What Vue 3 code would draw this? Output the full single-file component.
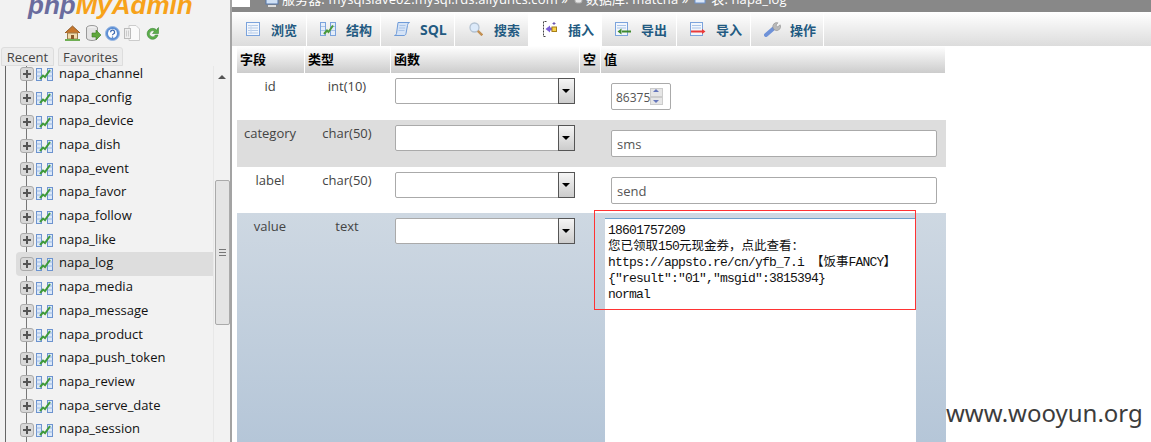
<script setup>
const tables = ['channel','config','device','dish','event','favor','follow','like','log','media','message','product','push_token','review','serve_date','session'].map(n => 'napa_' + n)
const tabs = [
  { k: 'browse', t: '浏览' }, { k: 'struct', t: '结构' }, { k: 'sql', t: 'SQL' }, { k: 'search', t: '搜索' },
  { k: 'insert', t: '插入', active: true }, { k: 'export', t: '导出' }, { k: 'import', t: '导入' }, { k: 'ops', t: '操作' }
]
const rows = [
  { f: 'id', t: 'int(10)', cls: 'r-id' },
  { f: 'category', t: 'char(50)', v: 'sms', cls: 'r-cat' },
  { f: 'label', t: 'char(50)', v: 'send', cls: 'r-label' }
]
</script>

<template>
  <div class="page">
    <aside class="nav">
      <div class="logo"><span class="php">php</span><span class="my">MyAdmin</span></div>
      <div class="quick">
        <svg width="17" height="16" viewBox="0 0 17 16"><path d="M1 8 8.500 1 16 8" fill="#c9772a" stroke="#8a5a2a"/><rect x="3.500" y="8" width="10" height="6" fill="#f1dcae" stroke="#9a7a4a"/><rect x="7" y="10" width="3" height="4" fill="#8a5a2a"/><rect x="1" y="14" width="15" height="2" fill="#6fae54"/></svg>
        <svg width="16" height="16" viewBox="0 0 16 16"><ellipse cx="7" cy="3" rx="5.500" ry="2.500" fill="#eee" stroke="#999"/><path d="M1.500 3v10c0 1.500 3 2.500 5.500 2.500s5.500-1 5.500-2.500V3" fill="#e4e4e4" stroke="#999"/><path d="M7 8h4V5l5 5-5 5v-3H7z" fill="#5fa83c" stroke="#3c7a22" stroke-width=".6"/></svg>
        <svg width="15" height="15" viewBox="0 0 15 15"><circle cx="7.500" cy="7.500" r="7" fill="#5d8fd4" stroke="#9ab8e2"/><circle cx="7.500" cy="7.500" r="4.500" fill="#fff"/><path d="M5.600 6.200a2 2 0 1 1 2.800 1.800c-.7.300-.9.700-.9 1.300M7.500 10.500v1.200" fill="none" stroke="#3a68b0" stroke-width="1.300"/></svg>
        <svg width="16" height="16" viewBox="0 0 16 16"><path d="M5 .5h7l3.500 3.500V15.500H5z" fill="#fafafa" stroke="#ccc"/><rect x=".5" y="3.500" width="6" height="10" fill="#eee" stroke="#bbb"/><path d="M2.500 5.500v6M4.500 5.500v6" stroke="#ccc"/></svg>
        <svg class="refresh" width="13" height="15" viewBox="0 0 13 15"><path d="M11 4.500A5.500 5.500 0 1 0 12 9H9.300A3 3 0 1 1 8.500 5.500L6.500 7.500H12.500V1.500L11 3z" fill="#5cae4a" stroke="#2f7a2a" stroke-width=".5"/></svg>
      </div>
      <div class="nav-tabs">
        <span class="nav-tab recent">Recent</span>
        <span class="nav-tab">Favorites</span>
      </div>
      <div class="tree-wrap">
        <ul class="tree">
          <li v-for="n in tables" :key="n" class="node" :class="{ sel: n === 'napa_log' }">
            <span class="plus"></span>
            <svg class="ticon" width="17" height="14" viewBox="0 0 17 14"><rect x=".5" y="1.500" width="5" height="12" fill="#dce8f8" stroke="#6c93cf"/><rect x="11.500" y="1.500" width="5" height="12" fill="#dce8f8" stroke="#6c93cf"/><path d="M.5 5h5M.5 9h5M11.500 5h5M11.500 9h5" stroke="#9ab8e2"/><path d="M4 12 7 8.500 9 10 14 3" fill="none" stroke="#3f9a3a" stroke-width="2"/></svg>
            <span class="name">{{ n }}</span>
          </li>
        </ul>
        <div class="sb">
          <span class="sb-up"></span>
          <div class="sb-thumb"><i></i><i></i><i></i></div>
        </div>
      </div>
    </aside>

    <main class="main">
      <div class="crumb">
        <span class="crumb-box"></span>
        <svg class="c-ico c-first" width="14" height="12" viewBox="0 0 14 12"><rect x="1" y="0" width="12" height="8" fill="#cfe0f5" stroke="#5577aa"/><rect x="3" y="9" width="8" height="2" fill="#ddd"/></svg>
        <span class="crumb-text">服务器: mysqlslave02.mysql.rds.aliyuncs.com »</span>
        <svg class="c-ico" width="9" height="12" viewBox="0 0 9 12"><rect x="1" y="-4" width="7" height="11" rx="2" fill="#e6e6e6" stroke="#aaa"/></svg>
        <span class="crumb-text">数据库: matcha »</span>
        <svg class="c-ico" width="14" height="12" viewBox="0 0 14 12"><rect x="1" y="-4" width="10" height="11" fill="#dce8f8" stroke="#6c93cf"/></svg>
        <span class="crumb-text">表: napa_log</span>
      </div>
      <nav class="tabs">
        <a v-for="tab in tabs" :key="tab.k" class="tab" :class="{ active: tab.active }">
          <span class="ico">
            <svg v-if="tab.k === 'browse'" width="14" height="14" viewBox="0 0 14 14"><rect x=".5" y=".5" width="13" height="13" fill="#f2f6fc" stroke="#7ba3dc"/><path d="M2 3.500h10M2 6h10M2 8.500h10M2 11h10" stroke="#b5cbe8"/><path d="M5 3v9" stroke="#c8d8ee"/></svg>
            <svg v-else-if="tab.k === 'struct'" width="16" height="14" viewBox="0 0 16 14"><rect x=".5" y=".5" width="5" height="13" fill="#e4edf9" stroke="#7ba3dc"/><rect x="10.500" y=".5" width="5" height="13" fill="#e4edf9" stroke="#7ba3dc"/><path d="M1 4.500h4M1 8.500h4M11 4.500h4M11 8.500h4" stroke="#a9c4e8"/><path d="M4 12 7 8.500 8.500 10 13 3.500" fill="none" stroke="#4a9a3a" stroke-width="2"/></svg>
            <svg v-else-if="tab.k === 'sql'" width="16" height="14" viewBox="0 0 16 14"><path d="M4 .5h11.500c-1.500.5-2 2-2 3l-1.500 8c-.2 1.200-1 2-2 2H.5c1 0 1.700-.8 2-2z" fill="#d5e3f6" stroke="#6f9bd8"/><path d="M5.500 3.500h6M5 6h6M4.500 8.500h6" stroke="#a9c4e8"/></svg>
            <svg v-else-if="tab.k === 'search'" width="14" height="14" viewBox="0 0 14 14"><circle cx="5.500" cy="5.500" r="4.500" fill="#dceafa" stroke="#b3c2d2" stroke-width="1.300"/><path d="M8.800 8.800 13.300 13.300" stroke="#c28f52" stroke-width="2.400"/></svg>
            <svg v-else-if="tab.k === 'insert'" width="14" height="16" viewBox="0 0 14 16"><path d="M3.500 .5H.5v15h3" fill="none" stroke="#444" stroke-dasharray="2 1"/><path d="M2.500 8 7 4.500V6.500H9V9.500H7V11.500z" fill="#7b5fd8"/><rect x="9" y="6" width="4.500" height="4.500" fill="#f6d24a" stroke="#a87f18"/><path d="M11 1v3M9.500 2.500h3" stroke="#6a55b0"/></svg>
            <svg v-else-if="tab.k === 'export'" width="16" height="14" viewBox="0 0 16 14"><rect x=".5" y=".5" width="12" height="13" fill="#f2f6fc" stroke="#7ba3dc"/><path d="M2 3.500h9M2 6h9" stroke="#a9c4e8"/><path d="M6 8.500h10v2H6zM6.500 6.500 2.500 9.500l4 3z" fill="#3f8a2e"/></svg>
            <svg v-else-if="tab.k === 'import'" width="16" height="14" viewBox="0 0 16 14"><rect x=".5" y=".5" width="12" height="13" fill="#f2f6fc" stroke="#7ba3dc"/><path d="M2 3.500h9M2 6h9" stroke="#a9c4e8"/><path d="M1 8.500h11v2H1zM12 7l3.500 2.500L12 12z" fill="#ea3a3a"/></svg>
            <svg v-else width="17" height="15" viewBox="0 0 17 15"><path d="M2 13 9.500 6.500" stroke="#6f92d8" stroke-width="4" stroke-linecap="round"/><path d="M9 6A4 4 0 0 1 14 .8l-2 2.400 1.700 1.600 2.500-2A4 4 0 0 1 10.500 8z" fill="#b9b9b9" stroke="#888" stroke-width=".5"/></svg>
          </span>
          <b :class="{ latin: tab.k === 'sql' }">{{ tab.t }}</b>
        </a>
      </nav>

      <div class="form">
        <div class="row head">
          <div class="c1">字段</div><div class="c2">类型</div><div class="c3">函数</div><div class="c4">空</div><div class="c5">值</div>
        </div>
        <div v-for="r in rows" :key="r.f" class="row" :class="r.cls">
          <div class="c1">{{ r.f }}</div>
          <div class="c2">{{ r.t }}</div>
          <div class="c3"><div class="sel-box"><span class="sel-btn"></span></div></div>
          <div class="c4"></div>
          <div class="c5">
            <div v-if="r.f === 'id'" class="num">86375<span class="spin"><i class="u"></i><i class="d"></i></span></div>
            <div v-else class="txt">{{ r.v }}</div>
          </div>
        </div>
        <div class="row r-value">
          <div class="c1">value</div>
          <div class="c2">text</div>
          <div class="c3"><div class="sel-box"><span class="sel-btn"></span></div></div>
          <div class="c4"></div>
          <div class="c5">
            <div class="area">
              <div>18601757209</div>
              <div><span class="zh">您已领取</span>150<span class="zh">元现金券&#xFF0C;点此查看&#xFF1A;</span></div>
              <div>https://appsto.re/cn/yfb_7.i <span class="zh">【饭事</span>FANCY<span class="zh">】</span></div>
              <div>{"result":"01","msgid":3815394}</div>
              <div>normal</div>
            </div>
          </div>
        </div>
      </div>
    </main>

    <div class="redbox"></div>
    <div class="mark">www.wooyun.org</div>
  </div>
</template>

<style scoped>
.page {
  position: relative;
  display: flex;
  width: 1151px;
  height: 442px;
  overflow: hidden;
  background: #fff;
  font-family: "Open Sans", "Noto Sans CJK SC", sans-serif;
}
.nav {
  width: 230px;
  flex: none;
  background: #f2f2f2;
  border-right: 2px solid #a3a3a3;
  display: flex;
  flex-direction: column;
}
.logo {
  height: 19px;
  overflow: hidden;
  padding-left: 28px;
  font: italic bold 26px/19px "Liberation Sans", sans-serif;
  white-space: nowrap;
}
.logo span { display: inline-block; margin-top: -12px; vertical-align: top; line-height: 34px; }
.php { color: #6a6c9e; }
.my { color: #f7a21a; }
.quick {
  height: 28px;
  display: flex;
  align-items: center;
  gap: 4px;
  padding-left: 64px;
  box-sizing: border-box;
}
.refresh { margin-left: 2px; }
.nav-tabs { display: flex; gap: 4px; padding-left: 1px; height: 19px; }
.nav-tab {
  border: 1px solid #ddd;
  border-radius: 3px 3px 0 0;
  background: #ececec;
  color: #444;
  font-size: 13px;
  line-height: 18px;
  padding: 0 4px;
}
.nav-tab.recent { width: 43px; text-align: center; }
.tree-wrap { position: relative; flex: 1; display: flex; overflow: hidden; min-height: 0; }
.tree {
  flex: 1;
  margin: -3.4px 0 0;
  padding: 0 0 0 16px;
  list-style: none;
  position: relative;
  background: linear-gradient(#666, #666) 5px 0/1px 100% no-repeat,
              linear-gradient(#777, #777) 26px 0/1px 100% no-repeat;
}
.node {
  height: 23.7px;
  display: flex;
  align-items: center;
  padding-left: 4px;
  border-radius: 4px 0 0 4px;
}
.node.sel { background: #ddd; }
.plus {
  position: relative;
  width: 12px;
  height: 12px;
  border: 1px solid #aaa;
  border-radius: 3px;
  background: #d8d8d8 linear-gradient(#555, #555) center/8px 2px no-repeat;
  flex: none;
}
.plus::after {
  content: "";
  position: absolute;
  left: 5px;
  top: 2px;
  width: 2px;
  height: 8px;
  background: #555;
}
.ticon { margin-left: 2px; flex: none; }
.name {
  margin-left: 6px;
  color: #111;
  font-size: 13px;
  line-height: 18px;
  margin-top: -3px;
}
.sb {
  width: 17px;
  flex: none;
  background: #f2f2f2;
  position: relative;
  border-left: 1px solid #e8e8e8;
  box-sizing: border-box;
  display: flex;
  flex-direction: column;
  align-items: center;
}
.sb-up {
  margin-top: 9px;
  width: 0;
  height: 0;
  border: 4px solid transparent;
  border-top: 0;
  border-bottom: 4px solid #555;
}
.sb-thumb {
  margin-top: 101px;
  width: 15px;
  height: 145px;
  background: #e4e4e4;
  border: 1px solid #aaa;
  border-radius: 2px;
  box-sizing: border-box;
  display: flex;
  flex-direction: column;
  justify-content: center;
  align-items: center;
  gap: 2px;
}
.sb-thumb i { width: 7px; height: 1px; background: #777; }
.main { flex: 1; min-width: 0; display: flex; flex-direction: column; }
.crumb {
  height: 12px;
  background: #888;
  display: flex;
  overflow: hidden;
  white-space: nowrap;
}
.crumb-box { width: 18px; height: 7px; background: #fff; flex: none; }
.c-ico { flex: none; margin: -4px 3px 0 0; }
.c-first { margin-left: 15px; }
.crumb-text {
  margin-top: -9px;
  margin-right: 6px;
  color: #fff;
  font-size: 13px;
  line-height: 16px;
  letter-spacing: .12px;
}
.tabs {
  height: 34px;
  display: flex;
  background: linear-gradient(#fff, #dcdcdc);
  flex: none;
}
.tab {
  width: 74px;
  display: flex;
  align-items: center;
  padding-left: 12px;
  box-sizing: border-box;
  gap: 9px;
  border-right: 1px solid #fff;
  flex: none;
}
.tab:nth-child(1), .tab:nth-child(6) { width: 75px; }
.tab:nth-child(5), .tab:nth-child(8) { width: 73px; }
.tab.active { background: #fff; }
.ico { width: 18px; display: flex; justify-content: center; flex: none; }
.tab b { color: #235a81; font-size: 13px; font-weight: 700; }
.tab b.latin { font-size: 14px; }
.form { margin-left: 5px; width: 709px; flex: 1; min-height: 0; }
.row { display: flex; font-size: 13px; color: #444; }
.head {
  height: 27px;
  background: linear-gradient(#fff, #ccc);
  color: #000;
  font-weight: 700;
  line-height: 27px;
}
.head > div { border-right: 1px solid #fff; box-sizing: border-box; padding-left: 3px; }
.c1 { width: 68px; flex: none; text-align: center; box-sizing: border-box; }
.c2 { width: 86px; flex: none; text-align: center; box-sizing: border-box; }
.c3 { width: 189px; flex: none; }
.c4 { width: 21px; flex: none; }
.c5 { flex: 1; }
.row:not(.head) .c1, .row:not(.head) .c2 { padding: 4px 2px 0 0; line-height: 18px; }
.head .c1, .head .c2 { text-align: left; }
.r-id, .r-cat, .r-label { height: 47px; }
.r-label { height: 46px; }
.r-cat { background: #ddd; }
.r-value {
  height: 229px;
  background: linear-gradient(#ced8e2, #b5c6d8);
}
.sel-box {
  margin: 5px 0 0 4px;
  width: 180px;
  height: 26px;
  box-sizing: border-box;
  background: #fff;
  border: 1px solid #aaa;
  border-radius: 2px;
  display: flex;
  justify-content: flex-end;
}
.sel-btn {
  width: 17px;
  margin: -1px -1px -1px 0;
  box-sizing: border-box;
  border: 1px solid #555;
  background: linear-gradient(#f5f5f5, #ccc);
  position: relative;
}
.sel-btn::after {
  content: "";
  position: absolute;
  left: 3px;
  top: 10px;
  border: 4px solid transparent;
  border-top: 4px solid #000;
  border-bottom: 0;
}
.num {
  margin: 10px 0 0 10px;
  width: 60px;
  height: 27px;
  box-sizing: border-box;
  border: 1px solid #aaa;
  border-radius: 2px;
  background: #fff;
  font-size: 12px;
  line-height: 27px;
  padding-left: 4px;
  display: flex;
  color: #555;
}
.spin { margin: 4px 0 0 0; width: 13px; height: 17px; display: flex; flex-direction: column; }
.spin i {
  flex: 1;
  background: #e6e6e6;
  border: 1px solid #ccc;
  position: relative;
}
.spin i::after {
  content: "";
  position: absolute;
  left: 2px;
  border: 3px solid transparent;
}
.spin .u::after { top: 0; border-top: 0; border-bottom: 3px solid #6677bb; }
.spin .d::after { top: 2px; border-bottom: 0; border-top: 3px solid #6677bb; }
.txt {
  margin: 10px 0 0 10px;
  width: 326px;
  height: 27px;
  box-sizing: border-box;
  border: 1px solid #aaa;
  border-radius: 2px;
  background: #fff;
  line-height: 27px;
  padding-left: 5px;
  color: #555;
}
.area {
  margin: 5px 0 0 4px;
  width: 311px;
  height: 240px;
  box-sizing: border-box;
  background: #fff;
  border-top: 1px solid #6fa0cc;
  padding: 4px 0 0 3px;
  font: 13px/16px "Liberation Mono", "Noto Sans CJK SC", monospace;
  letter-spacing: -.8px;
  color: #111;
  white-space: nowrap;
}
.area > div { height: 16px; }
.zh { font-family: "Noto Sans CJK SC", sans-serif; font-size: 12.500px; line-height: 1; letter-spacing: 0; }
.redbox {
  position: absolute;
  left: 594px;
  top: 210px;
  width: 320px;
  height: 98px;
  border: 1px solid #f33;
}
.mark {
  position: absolute;
  left: 946px;
  top: 399px;
  color: #3c3c3c;
  font: 24px/28px "Noto Sans", sans-serif;
}
</style>
